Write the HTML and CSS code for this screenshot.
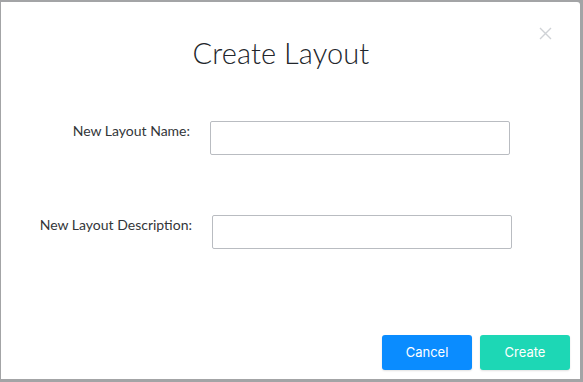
FILE: index.html
```html
<!DOCTYPE html>
<html>
<head>
<meta charset="utf-8">
<link rel="stylesheet" href="styles.css">
</head>
<body>
<div class="modal">
  <div class="modal-header">
    <h1 class="title">Create Layout</h1>
    <button class="close" aria-label="Close">
      <svg width="13" height="13" viewBox="0 0 13 13"><path d="M1 1L12 12M12 1L1 12" stroke="#cfd2d6" stroke-width="1.4" fill="none"/></svg>
    </button>
  </div>
  <div class="modal-body">
    <div class="row row-name">
      <label class="label">New Layout Name:</label>
      <input class="input" type="text">
    </div>
    <div class="row row-desc">
      <label class="label">New Layout Description:</label>
      <input class="input" type="text">
    </div>
  </div>
  <div class="modal-footer">
    <button class="btn btn-cancel">Cancel</button>
    <button class="btn btn-create">Create</button>
  </div>
</div>
</body>
</html>
```
FILE: styles.css
```css
html, body {
  margin: 0;
  padding: 0;
  height: 100%;
}
body {
  background: #a3a4a6;
  padding: 2px 3px 3px 1px;
  box-sizing: border-box;
  width: 583px;
  height: 382px;
  overflow: hidden;
}
.modal {
  background: #ffffff;
  height: 377px;
  width: 579px;
  border-radius: 0 3px 0 0;
  display: flex;
  flex-direction: column;
  box-sizing: border-box;
  font-family: Lato, "Open Sans", sans-serif;
  position: relative;
}
.modal-header {
  display: flex;
  justify-content: center;
  padding: 33px 19px 0 0;
  height: 72px;
  box-sizing: border-box;
}
.title {
  margin: 0;
  font-family: Lato, sans-serif;
  font-weight: 300;
  font-size: 29px;
  line-height: 36px;
  color: #22262b;
  letter-spacing: 0.1px;
}
.close {
  position: absolute;
  top: 25px;
  right: 28px;
  background: none;
  border: 0;
  padding: 0;
  width: 13px;
  height: 13px;
  display: flex;
}
.modal-body {
  display: flex;
  flex-direction: column;
  gap: 60px;
  padding-top: 47px;
}
.row {
  display: flex;
  align-items: flex-start;
  gap: 20px;
}
.label {
  width: 189px;
  text-align: right;
  font-size: 14px;
  line-height: 20px;
  color: #333639;
}
.row-desc .label {
  width: 191px;
}
.input {
  width: 300px;
  height: 34px;
  box-sizing: border-box;
  border: 1px solid #b9bcc1;
  border-radius: 2px;
  margin: 0;
  padding: 0 8px;
}
.modal-footer {
  margin-top: auto;
  display: flex;
  justify-content: flex-end;
  gap: 8px;
  padding: 0 10px 9px 0;
}
.btn {
  width: 90px;
  height: 35px;
  border: 0;
  border-radius: 3px;
  color: #ffffff;
  font-family: Inter, Roboto, sans-serif;
  font-size: 13px;
  line-height: 33px;
  padding: 0;
  box-shadow: 0 1px 2px rgba(0,0,0,0.12);
}
.btn-cancel {
  background: #0a8cff;
}
.btn-create {
  background: #1dd7b5;
}
```
